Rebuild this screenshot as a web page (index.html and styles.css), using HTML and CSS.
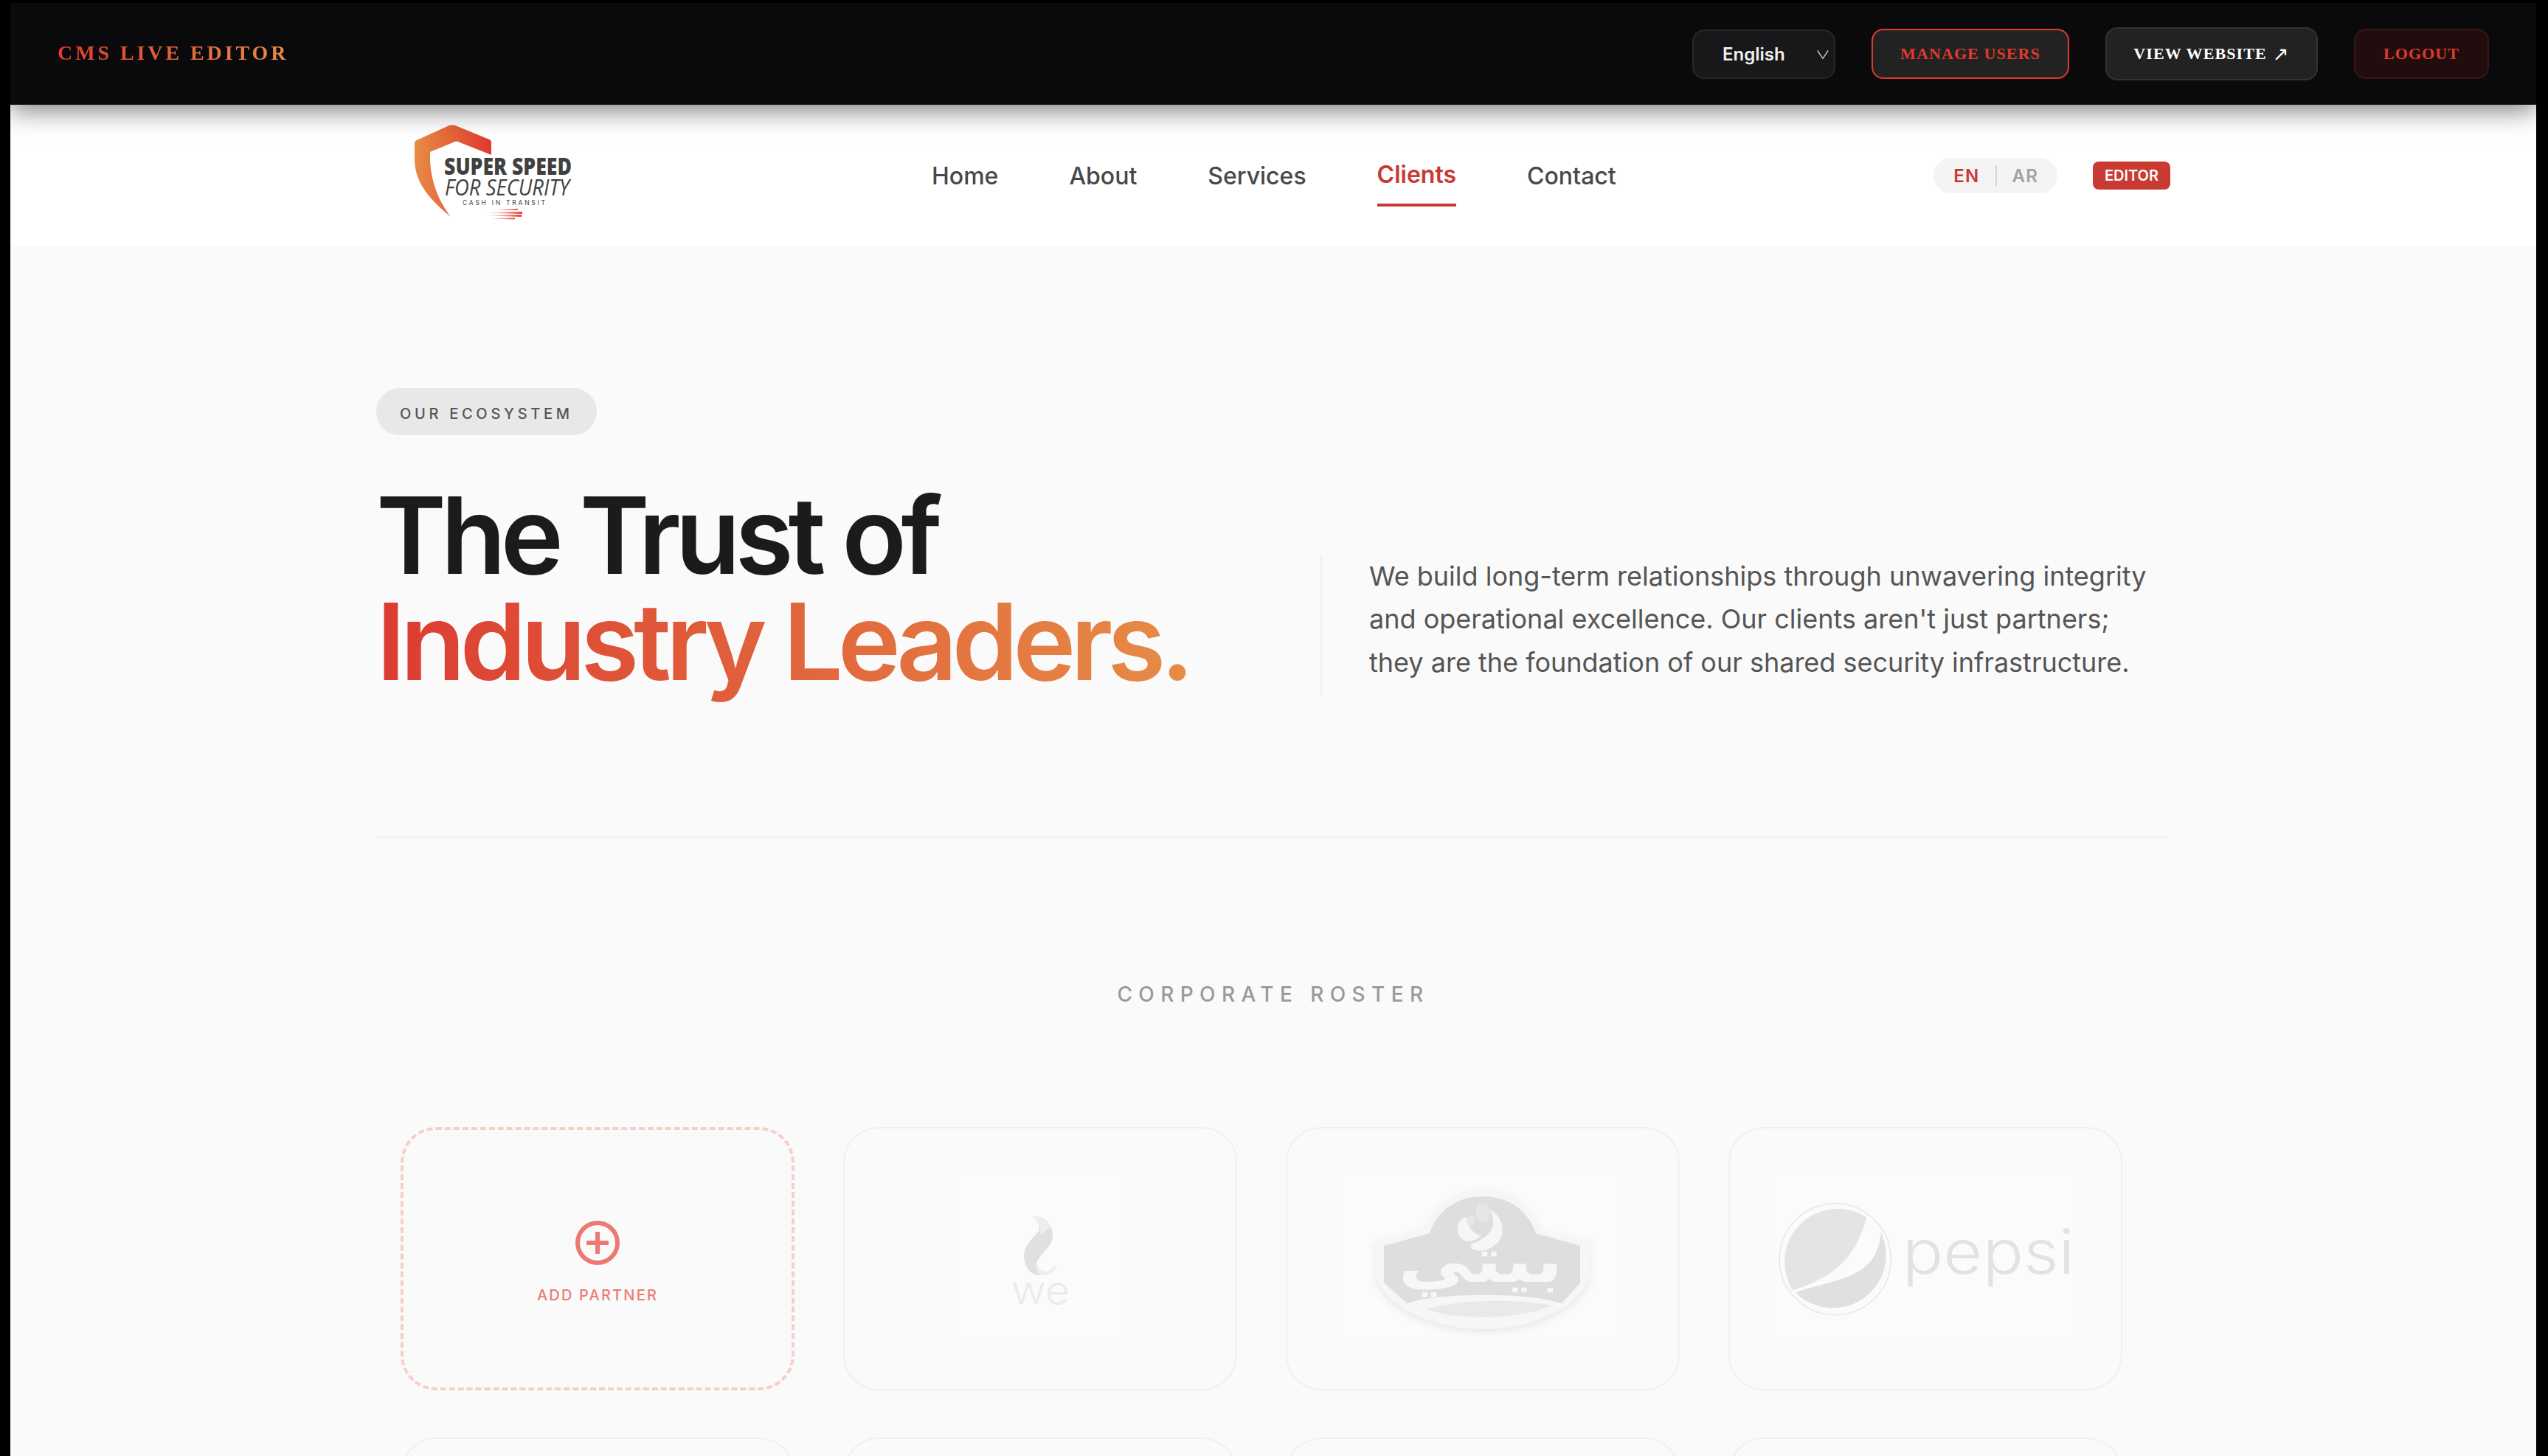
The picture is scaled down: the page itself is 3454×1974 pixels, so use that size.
FILE: index.html
```html
<!DOCTYPE html>
<html lang="en">
<head>
    <meta charset="UTF-8">
    <meta name="viewport" content="width=device-width, initial-scale=1.0">
    <title>Clients - CMS Live Editor</title>
    <link rel="stylesheet" href="styles.css">
</head>
<body>
    <div class="frame">
        <!-- dark editor toolbar -->
        <header class="cms-bar">
            <div class="cms-brand">CMS LIVE EDITOR</div>
            <div class="cms-actions">
                <div class="cms-lang">
                    <span>English</span>
                    <svg class="cms-chevron" viewBox="0 0 20 20"><path d="M2 5l8 12 8-12"/></svg>
                </div>
                <a class="cms-btn cms-users">MANAGE USERS</a>
                <a class="cms-btn cms-view">VIEW WEBSITE <span class="cms-arrow">↗</span></a>
                <a class="cms-btn cms-logout">LOGOUT</a>
            </div>
        </header>

        <!-- site nav -->
        <nav class="site-nav">
            <svg class="site-logo" viewBox="0 0 216 130">
                <defs>
                    <linearGradient id="shield" x1="0" x2="1" y1="0" y2="0">
                        <stop offset="0" stop-color="#e88c45"/>
                        <stop offset="1" stop-color="#e03a2e"/>
                    </linearGradient>
                    <linearGradient id="speed" x1="0" x2="1" y1="0" y2="0">
                        <stop offset="0" stop-color="#ffffff"/>
                        <stop offset="1" stop-color="#e03a2e"/>
                    </linearGradient>
                </defs>
                <path fill="url(#shield)" d="M1 25Q1 22 4 21L48 1Q52 0 56 1L102 20Q105 21 105 24V41L62 24Q59 22 56 23L22 37V50C24 80 34 104 50 125C20 100 3 80 1 50Z"/>
                <text class="logo-super" x="41" y="68" textLength="173" lengthAdjust="spacingAndGlyphs">SUPER SPEED</text>
                <text class="logo-for" x="42" y="96" textLength="169" lengthAdjust="spacingAndGlyphs">FOR SECURITY</text>
                <text class="logo-cash" x="66" y="109" textLength="112" lengthAdjust="spacing">CASH IN TRANSIT</text>
                <path fill="url(#speed)" d="M107 116L141 114V116ZM93 119.5L147 118V121ZM93 123L146 122V125ZM103 127.500L137 126V128.500Z"/>
            </svg>
            <ul class="nav-links">
                <li><a>Home</a></li>
                <li><a>About</a></li>
                <li><a>Services</a></li>
                <li><a class="active">Clients</a></li>
                <li><a>Contact</a></li>
            </ul>
            <div class="nav-right">
                <div class="lang-pill">
                    <span class="lang-on">EN</span>
                    <i class="lang-sep"></i>
                    <span class="lang-off">AR</span>
                </div>
                <span class="editor-badge">EDITOR</span>
            </div>
        </nav>

        <main class="page">
            <section class="hero">
                <span class="eyebrow">OUR ECOSYSTEM</span>
                <div class="hero-row">
                    <h1>The Trust of<br><span class="grad">Industry Leaders.</span></h1>
                    <p>We build long-term relationships through unwavering integrity and operational excellence. Our clients aren't just partners; they are the foundation of our shared security infrastructure.</p>
                </div>
            </section>

            <h2 class="roster-title">CORPORATE ROSTER</h2>

            <div class="roster">
                <div class="card card-add">
                    <svg class="add-icon" viewBox="0 0 60 60">
                        <circle cx="30" cy="30" r="27"/>
                        <path d="M30 15V45M15 30H45"/>
                    </svg>
                    <span>ADD PARTNER</span>
                </div>

                <div class="card">
                    <div class="logo-box box-we">
                        <svg class="logo-we" viewBox="0 0 140 150">
                            <path class="we-flame" d="M60 17C75 16 87 28 87 42C87 58 72 66 66 78C64 84 70 92 78 92C84 92 90 86 92 82C90 94 82 97 70 97C56 97 48 84 48 70C48 58 58 48 66 40C72 34 68 24 60 17Z"/>
                            <path class="we-light" d="M60 17C72 17 80 23 84 33L70 42C72 34 68 24 60 17ZM66 78C64 84 70 92 78 92C84 92 90 86 92 82C90 94 82 97 70 97C65 92 63 85 66 78Z"/>
                            <text class="we-text" x="31" y="136" textLength="79" lengthAdjust="spacingAndGlyphs">we</text>
                        </svg>
                    </div>
                </div>

                <div class="card">
                    <div class="logo-box box-beiti">
                        <svg class="logo-beiti" viewBox="0 0 340 230">
                            <path class="beiti-edge" d="M25 90L93 75C105 40 135 20 170 20C205 20 235 40 247 75L315 90V140C300 180 240 210 170 210C100 210 40 180 25 140Z"/>
                            <path class="beiti-body" d="M36 97L98 80C110 45 140 30 170 30C200 30 230 45 242 80L302 97V147L277 175C230 160 110 160 67 175L36 147Z"/>
                            <path class="beiti-dish" d="M95 183C130 170 220 168 263 178C220 198 130 198 95 183Z"/>
                            <ellipse class="beiti-dot" cx="170" cy="52" rx="10" ry="13"/>
                            <path class="beiti-swirl" d="M180 48C194 55 200 72 195 85C190 98 172 106 160 103C153 101 153 96 155 94C170 90 182 80 184 68C185 60 183 54 180 48ZM148 58C134 60 132 80 142 88C150 93 160 90 168 84C158 80 150 74 148 58Z"/>
                            <ellipse class="beiti-dot" cx="154" cy="62" rx="5" ry="7"/>
                            <text class="beiti-text" x="167" y="146" text-anchor="middle" textLength="223" lengthAdjust="spacingAndGlyphs" lang="ar" dir="rtl">بيتي</text>
                        </svg>
                    </div>
                </div>

                <div class="card">
                    <div class="logo-box box-pepsi">
                        <svg class="logo-pepsi" viewBox="6 -6.500 404 225">
                            <circle class="pepsi-ring" cx="85.700" cy="106.700" r="75.500"/>
                            <path class="pepsi-top" d="M128.300 50A72 72 0 0 0 28.300 149C77 133 113 110 128.300 50Z"/>
                            <path class="pepsi-bottom" d="M31.700 151.700C85 133 143 135 147.700 70A72 72 0 0 1 31.700 151.700Z"/>
                            <text class="pepsi-text" x="177" y="126.700" textLength="233" lengthAdjust="spacingAndGlyphs">pepsi</text>
                        </svg>
                    </div>
                </div>

                <div class="card"></div>
                <div class="card"></div>
                <div class="card"></div>
                <div class="card"></div>
            </div>
        </main>
    </div>
</body>
</html>
```

FILE: styles.css
```css
*, *::before, *::after {
    box-sizing: border-box;
}

html, body {
    height: 100%;
    margin: 0;
}

body {
    background: #000;
    overflow: hidden;
    font-family: 'Inter', sans-serif;
}

/* the screenshot has a black edge round the page */
.frame {
    margin: 4px 16px 0 14px;
    height: 1970px;
    background: #fafafa;
    overflow: hidden;
}

/* toolbar */
.cms-bar {
    position: relative;
    z-index: 2;
    display: flex;
    align-items: center;
    justify-content: space-between;
    height: 138px;
    padding: 0 64px;
    background: #0a0a0d;
    box-shadow: 0 8px 32px rgba(0, 0, 0, 0.5);
}

.cms-brand {
    margin-bottom: 3px;
    font: bold 28px 'Liberation Serif', serif;
    letter-spacing: 0.14em;
    background: linear-gradient(90deg, #e03a2e, #e88c45);
    -webkit-background-clip: text;
    background-clip: text;
    color: transparent;
}

.cms-actions {
    display: flex;
    align-items: center;
    gap: 49px;
}

.cms-lang {
    display: flex;
    align-items: center;
    justify-content: space-between;
    width: 194px;
    height: 67px;
    padding: 0 6px 0 39px;
    border: 2px solid #27272a;
    border-radius: 16px;
    background: #18181b;
    color: #f0f0f0;
    font-size: 24px;
    font-weight: 600;
}

.cms-chevron {
    width: 18px;
    height: 18px;
    fill: none;
    stroke: #c8c8c8;
    stroke-width: 1.6;
}

.cms-btn {
    display: flex;
    align-items: center;
    justify-content: center;
    height: 68px;
    border: 2px solid #333;
    border-radius: 16px;
    background: #222;
    font: bold 22px 'Liberation Serif', serif;
    letter-spacing: 0.05em;
}

.cms-users {
    width: 268px;
    border-color: #e03a2e;
    color: #e03a2e;
}

.cms-view {
    width: 288px;
    height: 72px;
    color: #fff;
}

.cms-arrow {
    margin-left: 8px;
    font: 26px 'DejaVu Sans', sans-serif;
}

.cms-logout {
    width: 183px;
    border-color: #3d1616;
    background: #210d0d;
    color: #e03a2e;
}

/* site nav */
.site-nav {
    display: flex;
    align-items: center;
    height: 192px;
    padding: 0 496px 0 547px;
    background: #fff;
}

.site-logo {
    flex: none;
    width: 216px;
    height: 130px;
    margin-bottom: 8px;
    overflow: visible;
}

.logo-super {
    font: 800 31px 'Open Sans', sans-serif;
    fill: #404040;
}

.logo-for {
    font: italic 400 31px 'Open Sans', sans-serif;
    fill: #404040;
}

.logo-cash {
    font: 400 8.500px 'Inter', sans-serif;
    fill: #404040;
}

.nav-links {
    display: flex;
    align-items: center;
    gap: 96px;
    margin: 0 0 0 486px;
    padding: 0;
    list-style: none;
    font-size: 32px;
    font-weight: 500;
    color: #484848;
}

.nav-links a {
    display: block;
}

.nav-links a.active {
    position: relative;
    margin-bottom: 4px;
    color: #c93a32;
    font-weight: 600;
}

/* underline of the current page */
.nav-links a.active::after {
    content: '';
    position: absolute;
    left: 0;
    right: 0;
    bottom: -24px;
    height: 4px;
    background: #c93a32;
}

.nav-right {
    display: flex;
    align-items: center;
    gap: 48px;
    margin-left: auto;
}

.lang-pill {
    display: flex;
    align-items: center;
    gap: 20px;
    height: 48px;
    padding: 0 26px 0 27px;
    border-radius: 24px;
    background: #f4f4f5;
    font-size: 24px;
    font-weight: 600;
    letter-spacing: 0.05em;
}

.lang-on {
    margin-right: 2px;
    color: #c93a32;
}

.lang-off {
    color: #a1a1aa;
}

.lang-sep {
    width: 2px;
    height: 28px;
    background: #d4d4d8;
}

.editor-badge {
    display: flex;
    align-items: center;
    justify-content: center;
    width: 105px;
    height: 38px;
    border-radius: 8px;
    background: #c93a32;
    color: #fff;
    font-size: 20px;
    font-weight: 600;
}

/* main */
.page {
    width: 2432px;
    margin-left: 496px;
}

.hero {
    padding: 192px 0 192px;
    border-bottom: 2px solid #f2f2f2;
}

.eyebrow {
    display: inline-block;
    height: 64px;
    padding: 0 32px;
    border-radius: 32px;
    background: #e8e8e8;
    color: #555;
    font-size: 20px;
    font-weight: 500;
    letter-spacing: 4.700px;
    line-height: 70px;
}

.hero-row {
    display: flex;
    align-items: flex-end;
    justify-content: space-between;
    margin-top: 64px;
}

h1 {
    margin: 0;
    color: #1a1c1a;
    font-size: 144px;
    font-weight: 600;
    line-height: 144px;
    letter-spacing: -0.05em;
}

.grad {
    background: linear-gradient(90deg, #dc3c32, #e68c46);
    -webkit-background-clip: text;
    background-clip: text;
    color: transparent;
}

.hero-row p {
    width: 1152px;
    margin: 0;
    padding: 0 0 15px 64px;
    border-left: 2px solid #f0eded;
    color: #555;
    font-size: 36px;
    line-height: 58.500px;
}

.roster-title {
    margin: 194px 0 0;
    color: #999;
    font-size: 28px;
    font-weight: 500;
    line-height: 36px;
    letter-spacing: 0.3em;
    text-align: center;
}

.roster {
    display: grid;
    grid-template-columns: repeat(4, 534px);
    grid-auto-rows: 357px;
    gap: 64px 66px;
    margin: 162px 0 0 33px;
}

.card {
    display: flex;
    align-items: center;
    justify-content: center;
    border: 2px solid #f0f0f0;
    border-radius: 48px;
}

.card-add {
    flex-direction: column;
    border: 4px dashed #f9cdc9;
    color: #ec7a72;
    font-size: 20px;
    font-weight: 500;
    letter-spacing: 0.11em;
}

.add-icon {
    width: 60px;
    height: 60px;
    margin: 9px 0 29px;
    fill: none;
    stroke: #ec7a72;
    stroke-width: 6;
}

.logo-box {
    display: flex;
    align-items: center;
    justify-content: center;
    height: 225px;
    background: #fbfbfb;
}

.box-we {
    width: 227px;
}

.box-beiti {
    width: 380px;
}

.box-pepsi {
    width: 404px;
}

.logo-we {
    width: 140px;
    height: 150px;
}

.we-flame {
    fill: #e0e0e0;
}

.we-light {
    fill: #eeeeee;
}

.we-text {
    font: 300 53px 'Inter', sans-serif;
    fill: #ebebeb;
}

.logo-beiti {
    width: 340px;
    height: 230px;
}

.beiti-edge {
    fill: #f6f6f6;
    filter: drop-shadow(0 4px 5px #e8e8e8);
}

.beiti-body {
    fill: #dedede;
}

.beiti-dish {
    fill: #e9e9e9;
}

.beiti-swirl {
    fill: #f6f6f6;
}

.beiti-dot {
    fill: #e6e6e6;
}

.beiti-text {
    font: bold 84px 'DejaVu Sans', sans-serif;
    fill: #f7f7f7;
}

.logo-pepsi {
    width: 404px;
    height: 225px;
}

.pepsi-ring {
    fill: #fbfbfb;
    stroke: #e6e6e6;
    stroke-width: 1.500;
}

.pepsi-top {
    fill: #e4e4e4;
}

.pepsi-bottom {
    fill: #e0e0e0;
}

.pepsi-text {
    font: 300 84px 'Inter', sans-serif;
    fill: #e2e2e2;
}
```
